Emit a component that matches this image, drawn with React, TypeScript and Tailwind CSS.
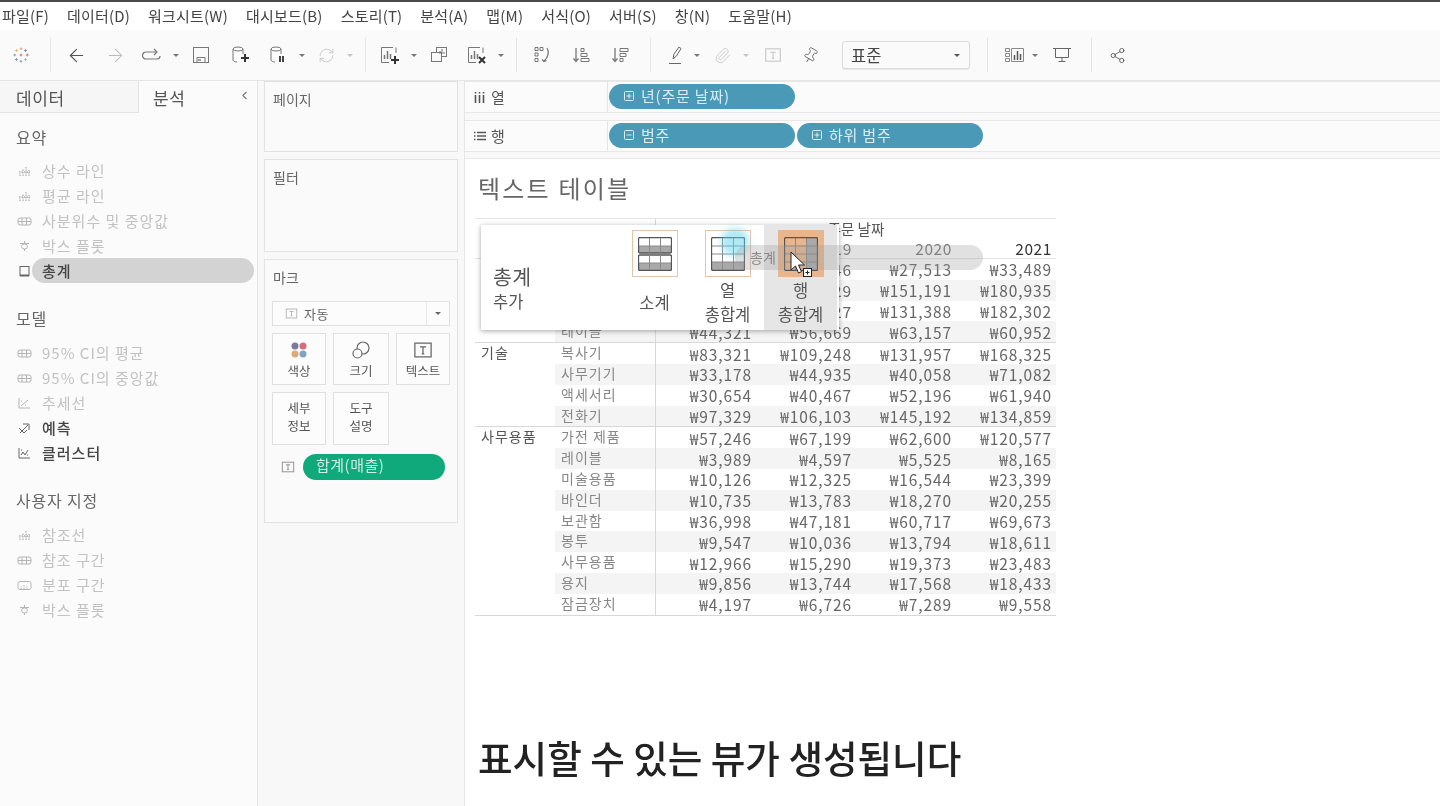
import type { ReactNode } from "react";
import { ArrowLeft, ArrowRight, RefreshCw, Paperclip, Pin, Share2, ChevronLeft } from "lucide-react";

const menus = ["파일(F)", "데이터(D)", "워크시트(W)", "대시보드(B)", "스토리(T)", "분석(A)", "맵(M)", "서식(O)", "서버(S)", "창(N)", "도움말(H)"];

function Slot({ w, children }: { w: string; children?: ReactNode }) {
  return <div className={`${w} shrink-0 h-full flex items-center justify-center`}>{children}</div>;
}
const Sep = () => <div className="w-px h-[34px] bg-[#e4e4e4]" />;
const Caret = ({ c = "#777" }: { c?: string }) => (
  <svg width="6" height="3" viewBox="0 0 6 3"><path d="M0 0h6L3 3z" fill={c} /></svg>
);

function Logo() {
  const marks: [number, number, string][] = [
    [10, 3, "#e8a27c"], [10, 17, "#8aa5b3"], [3, 10, "#8aa5b3"], [17, 10, "#d87080"],
    [10, 10, "#c4758a"], [5, 5, "#ebb070"], [15, 5, "#7a8fb0"], [5, 15, "#8a90b0"], [15, 15, "#9ab5bf"],
  ];
  return (
    <svg width="18" height="18" viewBox="0 0 20 20">
      {marks.map(([x, y, c]) => (
        <path key={`${x}-${y}`} d={`M${x - 1.500} ${y}h3M${x} ${y - 1.500}v3`} stroke={c} strokeWidth="1.100" />
      ))}
    </svg>
  );
}

function Db({ plus }: { plus?: boolean }) {
  return (
    <svg width="20" height="20" viewBox="0 0 20 20" fill="none" stroke="#777">
      <ellipse cx="8" cy="4" rx="5" ry="2" />
      <path d="M3 4v11c0 1 2 2 4 2M13 4v5" />
      {plus ? <path d="M15 9v8M11 13h8" stroke="#333" strokeWidth="2" /> : <path d="M12 11v6M15 11v6" stroke="#444" strokeWidth="2" />}
    </svg>
  );
}

function Chart({ kind }: { kind: "plus" | "dup" | "clear" }) {
  if (kind === "dup") {
    return (
      <svg width="20" height="20" viewBox="0 0 20 20" fill="none" stroke="#777">
        <rect x="7.500" y="2.500" width="10" height="9" fill="#fafafa" />
        <rect x="2.500" y="7.500" width="10" height="9" fill="#fafafa" />
        <path d="M11 9V6M13 9V4M15 9V7" />
      </svg>
    );
  }
  return (
    <svg width="22" height="20" viewBox="0 0 22 20" fill="none" stroke="#777">
      <path d="M14 2.500H2.500v15H10M17 2.500V8" />
      <path d="M5.500 14v-4M8.500 14V6M11.500 14V9" strokeWidth="1.500" />
      {kind === "plus" ? <path d="M16 11v8M12 15h8" stroke="#333" strokeWidth="2" /> : <path d="M13 12l6 6M19 12l-6 6" stroke="#333" strokeWidth="2" />}
    </svg>
  );
}

function Sort({ flip }: { flip?: boolean }) {
  return (
    <svg width="20" height="20" viewBox="0 0 20 20" fill="none" stroke="#777">
      <path d="M5 3v13M2.500 13.500L5 16.500l2.500-3" strokeWidth="1.300" />
      {flip ? <path d="M10 3.500h8v3h-8zM10 8.500h6v3h-6zM10 13.500h3v3h-3z" /> : <path d="M10 3.500h3v3h-3zM10 8.500h6v3h-6zM10 13.500h8v3h-8z" />}
    </svg>
  );
}

function TBox({ size = 16, c = "#aaa" }: { size?: number; c?: string }) {
  return (
    <svg width={size} height={size} viewBox="0 0 16 16" fill="none" stroke={c}>
      <rect x="1.500" y="2.500" width="13" height="11" />
      <path d="M5.500 5.500h5M8 5.500v5.500M7 11h2" />
    </svg>
  );
}

function Toolbar() {
  return (
    <div className="h-[51px] flex items-center bg-[#fafafa] border-b border-[#e6e6e6]">
      <Slot w="w-[42px]"><Logo /></Slot>
      <Slot w="w-[17px]"><Sep /></Slot>
      <Slot w="w-[34px]"><ArrowLeft size={21} strokeWidth={1.3} color="#555" /></Slot>
      <Slot w="w-[44px]"><ArrowRight size={21} strokeWidth={1.2} color="#bbb" /></Slot>
      <Slot w="w-[30px]">
        <svg width="20" height="14" viewBox="0 0 20 14" fill="none" stroke="#777" strokeWidth="1.200">
          <path d="M14 4H4a3 3 0 000 7h11a3 3 0 003-3" /><path d="M12 1l3 3-3 3" />
        </svg>
      </Slot>
      <Slot w="w-[18px]"><Caret /></Slot>
      <Slot w="w-[32px]">
        <svg width="18" height="18" viewBox="0 0 18 18" fill="none" stroke="#777">
          <rect x="1.500" y="1.500" width="15" height="15" /><path d="M5 16.500v-5h8v5" /><path d="M6 14h3" stroke="#444" />
        </svg>
      </Slot>
      <Slot w="w-[46px]"><Db plus /></Slot>
      <Slot w="w-[30px]"><Db /></Slot>
      <Slot w="w-[18px]"><Caret /></Slot>
      <Slot w="w-[30px]"><RefreshCw size={17} strokeWidth={1.2} color="#c4c4c4" /></Slot>
      <Slot w="w-[18px]"><Caret c="#c4c4c4" /></Slot>
      <Slot w="w-[12px]"><Sep /></Slot>
      <Slot w="w-[38px]"><Chart kind="plus" /></Slot>
      <Slot w="w-[10px]"><Caret /></Slot>
      <Slot w="w-[40px]"><Chart kind="dup" /></Slot>
      <Slot w="w-[36px]"><Chart kind="clear" /></Slot>
      <Slot w="w-[12px]"><Caret /></Slot>
      <Slot w="w-[18px]"><Sep /></Slot>
      <Slot w="w-[34px]">
        <svg width="20" height="20" viewBox="0 0 20 20" fill="none" stroke="#777">
          <path d="M3 2.500h3v3H3zM8 2.500h3v3H8zM3 8h3v3H3zM3 13.500h3v3H3z" /><path d="M15 3c2 3 2 9-3 13M10 14.500l2 2 2.500-1" strokeWidth="1.300" />
        </svg>
      </Slot>
      <Slot w="w-[44px]"><Sort /></Slot>
      <Slot w="w-[34px]"><Sort flip /></Slot>
      <Slot w="w-[26px]"><Sep /></Slot>
      <Slot w="w-[26px]">
        <svg width="18" height="20" viewBox="0 0 18 20" fill="none" stroke="#666">
          <path d="M6 14l1-5 5-7 2 1.500-4.500 7.500zM2 18.500h12" />
        </svg>
      </Slot>
      <Slot w="w-[16px]"><Caret /></Slot>
      <Slot w="w-[34px]"><Paperclip size={17} strokeWidth={1.2} color="#c4c4c4" /></Slot>
      <Slot w="w-[14px]"><Caret c="#c4c4c4" /></Slot>
      <Slot w="w-[40px]"><TBox size={18} c="#c8c8c8" /></Slot>
      <Slot w="w-[34px]"><Pin size={17} strokeWidth={1.2} color="#666" className="rotate-[30deg]" /></Slot>
      <div className="ml-[15px] w-[128px] h-[28px] shrink-0 flex items-center border border-[#dcdcdc] rounded-[3px] bg-[#fafafa] shadow-[0_1px_1px_rgba(0,0,0,0.08)]">
        <span className="flex-1 pl-[8px] text-[16.500px] text-[#444]">표준</span>
        <span className="w-[24px] flex justify-center"><Caret c="#555" /></span>
      </div>
      <Slot w="w-[34px]"><Sep /></Slot>
      <Slot w="w-[20px]">
        <svg width="20" height="16" viewBox="0 0 20 16" fill="none" stroke="#888">
          <path d="M1.500 1.500h4v3h-4zM1.500 6.500h4v3h-4zM1.500 11.500h4v3h-4zM7.500 1.500h12v13h-12z" /><path d="M10.500 13V8M13.500 13V4M16.500 13V7" strokeWidth="1.500" stroke="#555" />
        </svg>
      </Slot>
      <Slot w="w-[22px]"><Caret /></Slot>
      <Slot w="w-[32px]">
        <svg width="18" height="18" viewBox="0 0 18 18" fill="none" stroke="#666">
          <path d="M0 2.500h18M2.500 2.500v9h13v-9M9 11.500v4M5.500 15.500h7" />
        </svg>
      </Slot>
      <Slot w="w-[26px]"><Sep /></Slot>
      <Slot w="w-[26px]"><Share2 size={17} strokeWidth={1.2} color="#555" /></Slot>
    </div>
  );
}

type AnalysisIcon = "bars" | "band" | "box" | "book" | "trend" | "arrow" | "cluster" | "dist";

function AIcon({ kind, dark }: { kind: AnalysisIcon; dark?: boolean }) {
  const c = dark ? "#666" : "#b4b4b4";
  const paths: Record<AnalysisIcon, ReactNode> = {
    bars: <path d="M3 12V9M6 12V5M9 12V3M12 12V6M2 8h11" strokeDasharray="1.500 1" strokeWidth="1.300" />,
    band: <><rect x="1" y="4" width="13" height="7" rx="2" /><path d="M1 7.500h13M5 4v7M9.500 4v7" /></>,
    box: <path d="M7.500 2v2M3 4.500h9M4.500 7.500a3 2.500 0 106 0 3 2.500 0 10-6 0M7.500 10v2" />,
    book: <><rect x="3" y="2.500" width="9" height="9" /><path d="M3 11.500h9" strokeWidth="2" /></>,
    trend: <path d="M2 2v10h11M4 10l7-6M4 5h1M8 9h1" />,
    arrow: <path d="M3 12l8-8M6 3h6v6M2 7l5 5 3-3" />,
    cluster: <path d="M2 2v10h11M4 9l2-3 2 3 3-5M4 4h1M10 9h1" />,
    dist: <><rect x="1" y="3.500" width="13" height="8" rx="2" /><path d="M4 11V8M7 11V7M10 11V8" strokeDasharray="1.500 1" /></>,
  };
  return (
    <svg width="15" height="14" viewBox="0 0 15 14" fill="none" stroke={c}>
      {paths[kind]}
    </svg>
  );
}

function Item({ icon, label, tone = "off" }: { icon: AnalysisIcon; label: string; tone?: "off" | "on" }) {
  const on = tone === "on";
  return (
    <div className="h-[25px] flex items-center pl-[16px]">
      <span className="w-[16px] flex justify-center"><AIcon kind={icon} dark={on} /></span>
      <span className={`ml-[10px] text-[15px] leading-[20px] tracking-[1px] ${on ? "text-[#444] font-medium" : "text-[#c2c2c2]"}`}>{label}</span>
    </div>
  );
}

function Analysis() {
  return (
    <div className="w-[258px] shrink-0 bg-[#fbfbfb] border-r border-[#e6e6e6] flex flex-col">
      <div className="flex h-[32px] bg-[#f9f9f9]">
        <div className="w-[139px] border-r border-b border-[#e2e2e2] bg-[#f6f6f6] pl-[16px] pt-px text-[17px] leading-[32px] tracking-[0.6px] text-[#555]">데이터</div>
        <div className="flex-1 flex items-center justify-between pl-[14px] pr-[6px] pt-px bg-[#fbfbfb]">
          <span className="text-[17px] tracking-[0.6px] text-[#555]">분석</span>
          <ChevronLeft size={13} color="#777" className="-mt-[4px]" />
        </div>
      </div>
      <div className="pl-[16px] mt-[12px] h-[24px] text-[16px] leading-[24px] tracking-[0.8px] text-[#666]">요약</div>
      <div className="mt-[9px]">
        <Item icon="bars" label="상수 라인" />
        <Item icon="bars" label="평균 라인" />
        <Item icon="band" label="사분위수 및 중앙값" />
        <Item icon="box" label="박스 플롯" />
        <div className="h-[25px] flex items-center pl-[16px]">
          <span className="w-[16px] flex justify-center"><AIcon kind="book" dark /></span>
          <span className="w-[222px] h-[25px] rounded-full bg-[#d3d3d3] pl-[10px] text-[15px] leading-[25px] tracking-[1px] font-medium text-[#444]">총계</span>
        </div>
      </div>
      <div className="pl-[16px] mt-[23px] h-[24px] text-[16px] leading-[24px] tracking-[0.8px] text-[#666]">모델</div>
      <div className="mt-[10px]">
        <Item icon="band" label="95% CI의 평균" />
        <Item icon="band" label="95% CI의 중앙값" />
        <Item icon="trend" label="추세선" />
        <Item icon="arrow" label="예측" tone="on" />
        <Item icon="cluster" label="클러스터" tone="on" />
      </div>
      <div className="pl-[16px] mt-[23px] h-[24px] text-[16px] leading-[24px] tracking-[0.8px] text-[#666]">사용자 지정</div>
      <div className="mt-[10px]">
        <Item icon="bars" label="참조선" />
        <Item icon="band" label="참조 구간" />
        <Item icon="dist" label="분포 구간" />
        <Item icon="box" label="박스 플롯" />
      </div>
    </div>
  );
}

function MarkBtn({ w, icon, lines }: { w: string; icon?: ReactNode; lines: string[] }) {
  return (
    <div className={`${w} flex flex-col items-center justify-center border border-[#e0e0e0] bg-[#fcfcfc] text-[12.500px] leading-[18px] text-[#555]`}>
      {icon && <div className="h-[24px] flex items-center">{icon}</div>}
      {lines.map(l => <div key={l}>{l}</div>)}
    </div>
  );
}

function Shelves() {
  return (
    <div className="w-[207px] shrink-0 flex flex-col gap-[7px] px-[6px] border-r border-[#e6e6e6] bg-[#f8f8f8]">
      <div className="h-[71px] border border-[#e2e2e2] bg-[#fafafa] px-[8px] pt-[7px] text-[14px] text-[#666]">페이지</div>
      <div className="h-[93px] border border-[#e2e2e2] bg-[#fafafa] px-[8px] pt-[7px] text-[14px] text-[#666]">필터</div>
      <div className="h-[264px] border border-[#e2e2e2] bg-[#fafafa] px-[7px] pt-[7px]">
        <div className="text-[14px] text-[#666] pl-px h-[28px]">마크</div>
        <div className="mt-[6px] h-[25px] flex items-center border border-[#e0e0e0] bg-[#fcfcfc]">
          <span className="ml-[12px]"><TBox size={13} /></span>
          <span className="ml-[6px] flex-1 text-[13px] tracking-[0.5px] text-[#666]">자동</span>
          <span className="w-[23px] h-full flex items-center justify-center border-l border-[#e8e8e8]"><Caret c="#666" /></span>
        </div>
        <div className="mt-[7px] flex gap-[7px]">
          <MarkBtn w="w-[54px] h-[52px]" lines={["색상"]} icon={
            <svg width="18" height="18" viewBox="0 0 18 18">
              <circle cx="5" cy="5" r="3.500" fill="#7a7a9a" /><circle cx="13" cy="5" r="3.500" fill="#d0707f" />
              <circle cx="5" cy="13" r="3.500" fill="#e0a878" /><circle cx="13" cy="13" r="3.500" fill="#7aa5c5" />
            </svg>} />
          <MarkBtn w="w-[56px] h-[52px]" lines={["크기"]} icon={
            <svg width="20" height="20" viewBox="0 0 20 20" fill="none" stroke="#666" strokeWidth="1.200">
              <circle cx="12" cy="8" r="6" /><circle cx="6.500" cy="13.500" r="4.500" fill="#fcfcfc" />
            </svg>} />
          <MarkBtn w="w-[54px] h-[52px]" lines={["텍스트"]} icon={<TBox size={20} c="#666" />} />
        </div>
        <div className="mt-[7px] flex gap-[7px]">
          <MarkBtn w="w-[54px] h-[53px] pb-[3px]" lines={["세부", "정보"]} />
          <MarkBtn w="w-[56px] h-[53px] pb-[3px]" lines={["도구", "설명"]} />
        </div>
        <div className="mt-[9px] flex items-center">
          <span className="ml-[9px] w-[22px]"><TBox size={14} c="#888" /></span>
          <div className="w-[142px] h-[26px] rounded-full bg-[#10a97c] pl-[13px] text-[15px] leading-[22px] tracking-[0.5px] text-[#cdeee3]">합계(매출)</div>
        </div>
      </div>
    </div>
  );
}

function FieldPill({ label, minus }: { label: string; minus?: boolean }) {
  return (
    <div className="w-[186px] h-[25px] rounded-full bg-[#4a9ab7] flex items-center pl-[15px] text-[15px] tracking-[0.8px] text-[#d9edf3]">
      <svg width="10" height="10" viewBox="0 0 10 10" fill="none" stroke="#d9edf3">
        <rect x="0.500" y="0.500" width="9" height="9" rx="1" />
        <path d={minus ? "M2.500 5h5" : "M2.500 5h5M5 2.500v5"} />
      </svg>
      <span className="ml-[7px]">{label}</span>
    </div>
  );
}

function ShelfRow({ icon, label, children }: { icon: ReactNode; label: string; children: ReactNode }) {
  return (
    <div className="h-[32px] flex border-y border-[#e8e8e8] bg-[#fbfbfb]">
      <div className="w-[143px] shrink-0 flex items-center pl-[7px] border-r border-[#e4e4e4] text-[15px] text-[#555]">
        <span className="w-[15px] flex justify-center">{icon}</span>
        <span className="ml-[4px]">{label}</span>
      </div>
      <div className="flex items-center gap-[2px] pl-[1px] pb-[2px]">{children}</div>
    </div>
  );
}

type Row = [string, string, string, string, string];
// Cells the popup covers in the screenshot are left blank, only what shows is written out.
const groups: { cat: string; rows: Row[] }[] = [
  { cat: "", rows: [
    ["", "", "46", "₩27,513", "₩33,489"],
    ["", "", "29", "₩151,191", "₩180,935"],
    ["", "", "27", "₩131,388", "₩182,302"],
    ["테이블", "₩44,321", "₩56,669", "₩63,157", "₩60,952"],
  ] },
  { cat: "기술", rows: [
    ["복사기", "₩83,321", "₩109,248", "₩131,957", "₩168,325"],
    ["사무기기", "₩33,178", "₩44,935", "₩40,058", "₩71,082"],
    ["액세서리", "₩30,654", "₩40,467", "₩52,196", "₩61,940"],
    ["전화기", "₩97,329", "₩106,103", "₩145,192", "₩134,859"],
  ] },
  { cat: "사무용품", rows: [
    ["가전 제품", "₩57,246", "₩67,199", "₩62,600", "₩120,577"],
    ["레이블", "₩3,989", "₩4,597", "₩5,525", "₩8,165"],
    ["미술용품", "₩10,126", "₩12,325", "₩16,544", "₩23,399"],
    ["바인더", "₩10,735", "₩13,783", "₩18,270", "₩20,255"],
    ["보관함", "₩36,998", "₩47,181", "₩60,717", "₩69,673"],
    ["봉투", "₩9,547", "₩10,036", "₩13,794", "₩18,611"],
    ["사무용품", "₩12,966", "₩15,290", "₩19,373", "₩23,483"],
    ["용지", "₩9,856", "₩13,744", "₩17,568", "₩18,433"],
    ["잠금장치", "₩4,197", "₩6,726", "₩7,289", "₩9,558"],
  ] },
];

function DataTable() {
  return (
    <div className="ml-[10px] w-[581px] border-b border-[#d8d8d8] text-[15.500px] text-[#666]">
      <div className="h-[41px] flex border-y border-[#e4e4e4]">
        <div className="w-[181px] border-r border-[#d8d8d8]" />
        <div className="flex-1 flex flex-col">
          <div className="h-[20px] text-center text-[14.500px] leading-[20px] text-[#555]">주문 날짜</div>
          <div className="flex h-[20px] leading-[18px] tracking-[0.6px]">
            {["2018", "2019", "2020"].map(y => <div key={y} className="w-[100px] text-right pr-[4px] text-[#777]">{y}</div>)}
            <div className="w-[100px] text-right pr-[4px] text-[#333]">2021</div>
          </div>
        </div>
      </div>
      {groups.map((g, gi) => (
        <div key={gi} className={`flex ${gi > 0 ? "border-t border-[#d8d8d8]" : ""}`}>
          <div className="w-[80px] shrink-0 pl-[6px] text-[14px] leading-[19px] tracking-[1px] text-[#555]">{g.cat}</div>
          <div className="flex-1">
            {g.rows.map((r, i) => (
              <div key={i} className={`h-[20.800px] flex items-center ${i % 2 === 1 ? "bg-[#f4f4f4]" : ""}`}>
                <div className="w-[101px] shrink-0 pl-[6px] h-full border-r border-[#d8d8d8] text-[14px] leading-[19px] tracking-[1px] text-[#888]">{r[0]}</div>
                {r.slice(1).map((v, k) => <div key={k} className="w-[100px] text-right pr-[4px] leading-[20px] tracking-[0.9px]">{v}</div>)}
              </div>
            ))}
          </div>
        </div>
      ))}
    </div>
  );
}

function TotalIcon({ variant }: { variant: "sub" | "col" | "row" }) {
  const fill = "#a9a9a9";
  if (variant === "sub") {
    return (
      <svg width="34" height="34" viewBox="0 0 34 34" fill="none" stroke="#555">
        <path d="M1 9h32v7H1zM1 26h32v7H1z" fill={fill} stroke="none" />
        <rect x="0.500" y="0.500" width="33" height="15.500" rx="1.500" strokeWidth="1.300" />
        <rect x="0.500" y="18" width="33" height="15.500" rx="1.500" strokeWidth="1.300" />
        <path d="M11.500 1v15M22.500 1v15M11.500 18v15M22.500 18v15M1 9h32M1 26h32" stroke="#8a8a8a" />
      </svg>
    );
  }
  return (
    <svg width="34" height="34" viewBox="0 0 34 34" fill="none" stroke="#555">
      {variant === "col" ? <path d="M1 25h32v8H1z" fill={fill} stroke="none" /> : <path d="M23 1h10v32H23z" fill={fill} stroke="none" />}
      <path d="M1 9h32M1 17h32M1 25h32M11.500 1v32M22.500 1v32" stroke="#8a8a8a" />
      <rect x="0.500" y="0.500" width="33" height="33" rx="1.500" strokeWidth="1.300" />
    </svg>
  );
}

function TotalOption({ variant, lines, active }: { variant: "sub" | "col" | "row"; lines: string[]; active?: boolean }) {
  return (
    <div className={`w-[73px] h-full flex flex-col items-center pt-[5px] ${active ? "bg-[#e6e6e6]" : ""}`}>
      <div className={`w-[46px] h-[47px] shrink-0 flex items-center justify-center border ${active ? "bg-[#e9b58d] border-[#e9b58d]" : "bg-white border-[#e3c4ac]"}`}>
        <TotalIcon variant={variant} />
      </div>
      <div className="flex-1 flex flex-col justify-center pb-[3px] text-[16.500px] leading-[24px] text-[#555] text-center">
        {lines.map(l => <div key={l}>{l}</div>)}
      </div>
    </div>
  );
}

function TotalsPopup() {
  return (
    <div className="absolute left-[16px] top-[66px] w-[358px] h-[105px] bg-white shadow-[0_1px_5px_rgba(0,0,0,0.35)] flex">
      <div className="w-[137px] pl-[12px] pt-[38px] shrink-0">
        <div className="text-[20.500px] leading-[26px] tracking-[0.5px] text-[#555]">총계</div>
        <div className="text-[16.500px] leading-[24px] text-[#555]">추가</div>
      </div>
      <TotalOption variant="sub" lines={["소계"]} />
      <TotalOption variant="col" lines={["열", "총합계"]} />
      <TotalOption variant="row" lines={["행", "총합계"]} active />
    </div>
  );
}

function DragGhost() {
  return (
    <>
      <div className="absolute left-[256px] top-[69px] w-[28px] h-[28px] rounded-full bg-[#5fd4ee]/50 blur-[3px]" />
      <div className="absolute left-[270px] top-[86px] w-[248px] h-[25px] rounded-full bg-[#9a9a9a]/30 pl-[15px] text-[14px] leading-[25px] text-[#8a8a8a]">총계</div>
      <svg className="absolute left-[325px] top-[92px]" width="26" height="28" viewBox="0 0 26 28">
        <path d="M1 1v18l4.500-4 3 7 3-1.300-3-6.700h6z" fill="#fff" stroke="#222" strokeWidth="1" />
        <rect x="13.500" y="17.500" width="8" height="8" fill="#fff" stroke="#222" />
        <path d="M15.500 21.500h4M17.500 19.500v4" stroke="#222" />
      </svg>
    </>
  );
}

export default function App() {
  return (
    <div className="w-[1440px] h-[806px] overflow-hidden bg-white flex flex-col blur-[0.4px] [font-family:'Noto_Sans_CJK_KR','Noto_Sans',sans-serif]">
      <div className="h-[2px] bg-[#4a4a4a] shrink-0" />
      <div className="h-[28px] shrink-0 flex items-center gap-[18px] pl-[2px] bg-white text-[15px] tracking-[0.2px] text-[#444]">
        {menus.map(m => <span key={m}>{m}</span>)}
      </div>
      <Toolbar />
      <div className="flex-1 flex min-h-0">
        <Analysis />
        <Shelves />
        <div className="flex-1 min-w-0 flex flex-col bg-white">
          <div className="flex flex-col gap-[7px] bg-[#f8f8f8] pb-[6px]">
            <ShelfRow label="열" icon={
              <svg width="11" height="11" viewBox="0 0 11 11" stroke="#555" strokeWidth="1.600"><path d="M1.500 3v8M5.500 3v8M9.500 3v8M1.500 0v1.500M5.500 0v1.500M9.500 0v1.500" /></svg>
            }><FieldPill label="년(주문 날짜)" /></ShelfRow>
            <ShelfRow label="행" icon={
              <svg width="12" height="10" viewBox="0 0 12 10" stroke="#555" strokeWidth="1.600"><path d="M3 1.500h9M3 5h9M3 8.500h9M0 1.500h1.500M0 5h1.500M0 8.500h1.500" /></svg>
            }>
              <FieldPill label="범주" minus />
              <FieldPill label="하위 범주" />
            </ShelfRow>
          </div>
          <div className="relative flex-1 border-t border-[#e8e8e8]">
            <div className="pl-[13px] pt-[11px] h-[59px] text-[24px] tracking-[2.200px] text-[#666]">텍스트 테이블</div>
            <DataTable />
            <TotalsPopup />
            <DragGhost />
            <div className="mt-[114px] pl-[13px] text-[37.600px] leading-[54px] font-medium text-[#222]">표시할 수 있는 뷰가 생성됩니다</div>
          </div>
        </div>
      </div>
    </div>
  );
}
